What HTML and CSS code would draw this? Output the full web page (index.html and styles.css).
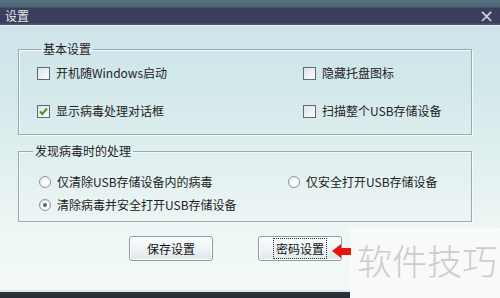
FILE: index.html
```html
<!DOCTYPE html>
<html lang="zh">
<head>
<meta charset="utf-8">
<link rel="stylesheet" href="styles.css">
</head>
<body>
<div class="window">
  <div class="titlebar">
    <span class="title">设置</span>
    <span class="close">×</span>
  </div>
  <div class="content">
    <fieldset class="group g1">
      <legend>基本设置</legend>
      <div class="grid grid1">
        <label class="opt"><span class="check"></span>开机随Windows启动</label>
        <label class="opt"><span class="check"></span>隐藏托盘图标</label>
        <label class="opt"><span class="check checked"><svg viewBox="0 0 11 11" width="11" height="11"><path d="M2 5.5 L4.3 8 L9 2.5" fill="none" stroke="#3f9a1c" stroke-width="2"/></svg></span>显示病毒处理对话框</label>
        <label class="opt"><span class="check"></span>扫描整个USB存储设备</label>
      </div>
    </fieldset>
    <fieldset class="group g2">
      <legend>发现病毒时的处理</legend>
      <div class="grid grid2">
        <label class="opt"><span class="radio"></span>仅清除USB存储设备内的病毒</label>
        <label class="opt"><span class="radio"></span>仅安全打开USB存储设备</label>
        <label class="opt"><span class="radio on"></span>清除病毒并安全打开USB存储设备</label>
      </div>
    </fieldset>
    <div class="buttons">
      <button class="btn">保存设置</button>
      <button class="btn focus"><span class="focusring">密码设置</span></button>
    </div>
  </div>
  <div class="bottombar"></div>
  <div class="watermark">软件技巧</div>
  <svg class="arrow" viewBox="0 0 20 18" width="20" height="18"><polygon points="0,9 9,2 9,6 19,6 19,13 9,13 9,16" fill="#e8140f"/></svg>
</div>
</body>
</html>
```
FILE: styles.css
```css
* { box-sizing: border-box; }
html, body { margin: 0; padding: 0; }
body {
  width: 500px;
  height: 298px;
  overflow: hidden;
  font-family: "Noto Sans CJK SC", "Noto Sans", sans-serif;
  font-size: 12px;
  color: #222;
}
.window {
  position: relative;
  width: 500px;
  height: 298px;
  display: flex;
  flex-direction: column;
}
.titlebar {
  height: 25px;
  background: linear-gradient(#56707f 0, #4f6577 7px, #3b3f5d 8px, #3a3d5c 23px, #4d5a70 24px, #4d5a70 25px);
  display: flex;
  align-items: center;
  justify-content: space-between;
  padding: 6px 6px 0 5px;
  color: #e6e9ee;
}
.title { font-size: 12px; line-height: 14px; }
.close { font-size: 18px; line-height: 14px; color: #cfd8de; font-family: "DejaVu Sans", sans-serif; }
.content {
  height: 265px;
  padding: 0 0 0 18px;
  background: linear-gradient(#cfe4ea 0, #d3e8ea 60px, #e4f1f1 150px, #f0f8f5 220px, #f2f9f6 265px);
  border-top: 1px solid #dbeef2;
}
.group {
  width: 454px;
  margin: 0;
  border: 1px solid #98aab0;
  box-shadow: inset 1px 1px 0 #f4fbfb, 1px 1px 0 #f4fbfb;
}
.group legend {
  font-size: 12px;
  line-height: 14px;
  padding: 0 2px;
  color: #222;
}
.g1 { margin-top: 16px; padding: 9px 0 15px 18px; }
.g1 legend { margin-left: 4px; }
.g2 { margin-top: 9px; padding: 16px 0 8px 20px; }
.g2 legend { margin-left: -6px; }
.grid { display: grid; }
.grid1 { grid-template-columns: 266px auto; row-gap: 22px; }
.grid2 { grid-template-columns: 249px auto; row-gap: 7px; }
.opt {
  display: flex;
  align-items: center;
  height: 16px;
  line-height: 16px;
  white-space: nowrap;
}
.check {
  width: 13px;
  height: 13px;
  border: 1px solid #5d6a72;
  background: linear-gradient(135deg, #dfe3e6, #fbfcfc);
  margin-right: 6px;
  display: flex;
  align-items: center;
  justify-content: center;
  flex: none;
}
.radio {
  width: 12px;
  height: 12px;
  border-radius: 50%;
  border: 1px solid #8a979f;
  background: radial-gradient(circle at 60% 60%, #ffffff 30%, #d8dde0 100%);
  margin-right: 6px;
  flex: none;
  display: flex;
  align-items: center;
  justify-content: center;
}
.radio.on::after {
  content: "";
  width: 4px;
  height: 4px;
  border-radius: 50%;
  background: #5a6670;
}
.buttons {
  display: flex;
  gap: 45px;
  padding-left: 111px;
  margin-top: 14px;
}
.btn {
  width: 84px;
  height: 25px;
  border: 1px solid #8c9ba4;
  border-radius: 3px;
  background: linear-gradient(#fbfdfd, #eef3f5 50%, #dfe8ec);
  font-family: inherit;
  font-size: 12px;
  color: #111;
  padding: 0;
  box-shadow: inset 0 0 0 1px #ffffff;
}
.focusring {
  border: 1px dotted #333;
  padding: 1px 2px;
}
.bottombar {
  height: 8px;
  background: linear-gradient(#dfe9ea 0, #dfe9ea 2px, #2b333b 2px, #262d34 8px);
}
.watermark {
  position: absolute;
  left: 350px;
  top: 228px;
  width: 150px;
  height: 70px;
  background: #f8f9f9;
  color: #cccccc;
  font-size: 35px;
  font-weight: 300;
  line-height: 64px;
  padding-left: 7px;
  letter-spacing: 0;
}
.arrow {
  position: absolute;
  left: 332px;
  top: 242px;
}
```
